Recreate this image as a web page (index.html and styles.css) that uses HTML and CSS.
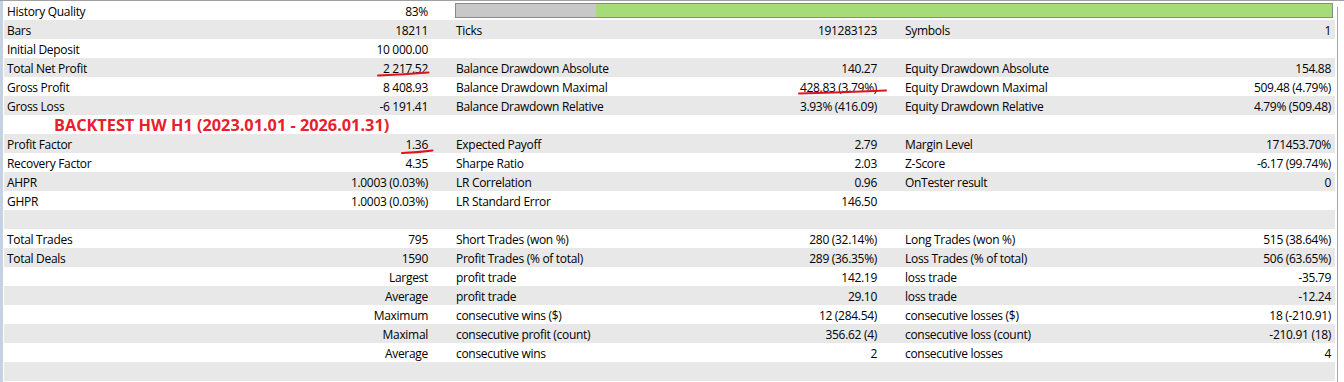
FILE: index.html
```html
<!DOCTYPE html>
<html lang="en">
<head>
<meta charset="utf-8">
<title>Backtest report</title>
<link rel="stylesheet" href="styles.css">
</head>
<body>
<div class="window">
  <div class="edge"></div>
  <div class="report">
    <div class="row">
      <div class="cell"><span>History Quality</span><span>83%</span></div>
      <div class="quality"><div class="q-grey"></div><div class="q-green"></div></div>
    </div>
    <div class="row alt">
      <div class="cell"><span>Bars</span><span>18211</span></div>
      <div class="cell"><span>Ticks</span><span>191283123</span></div>
      <div class="cell"><span>Symbols</span><span>1</span></div>
    </div>
    <div class="row">
      <div class="cell"><span>Initial Deposit</span><span>10 000.00</span></div>
      <div class="cell"></div>
      <div class="cell"></div>
    </div>
    <div class="row alt">
      <div class="cell"><span>Total Net Profit</span><span>2 217.52</span></div>
      <div class="cell"><span>Balance Drawdown Absolute</span><span>140.27</span></div>
      <div class="cell"><span>Equity Drawdown Absolute</span><span>154.88</span></div>
    </div>
    <div class="row">
      <div class="cell"><span>Gross Profit</span><span>8 408.93</span></div>
      <div class="cell"><span>Balance Drawdown Maximal</span><span>428.83 (3.79%)</span></div>
      <div class="cell"><span>Equity Drawdown Maximal</span><span>509.48 (4.79%)</span></div>
    </div>
    <div class="row alt">
      <div class="cell"><span>Gross Loss</span><span>-6 191.41</span></div>
      <div class="cell"><span>Balance Drawdown Relative</span><span>3.93% (416.09)</span></div>
      <div class="cell"><span>Equity Drawdown Relative</span><span>4.79% (509.48)</span></div>
    </div>
    <div class="row">
      <div class="cell"><span class="title">BACKTEST HW H1 (2023.01.01 - 2026.01.31)</span></div>
      <div class="cell"></div>
      <div class="cell"></div>
    </div>
    <div class="row alt">
      <div class="cell"><span>Profit Factor</span><span>1.36</span></div>
      <div class="cell"><span>Expected Payoff</span><span>2.79</span></div>
      <div class="cell"><span>Margin Level</span><span>171453.70%</span></div>
    </div>
    <div class="row">
      <div class="cell"><span>Recovery Factor</span><span>4.35</span></div>
      <div class="cell"><span>Sharpe Ratio</span><span>2.03</span></div>
      <div class="cell"><span>Z-Score</span><span>-6.17 (99.74%)</span></div>
    </div>
    <div class="row alt">
      <div class="cell"><span>AHPR</span><span>1.0003 (0.03%)</span></div>
      <div class="cell"><span>LR Correlation</span><span>0.96</span></div>
      <div class="cell"><span>OnTester result</span><span>0</span></div>
    </div>
    <div class="row">
      <div class="cell"><span>GHPR</span><span>1.0003 (0.03%)</span></div>
      <div class="cell"><span>LR Standard Error</span><span>146.50</span></div>
      <div class="cell"></div>
    </div>
    <div class="row alt"></div>
    <div class="row">
      <div class="cell"><span>Total Trades</span><span>795</span></div>
      <div class="cell"><span>Short Trades (won %)</span><span>280 (32.14%)</span></div>
      <div class="cell"><span>Long Trades (won %)</span><span>515 (38.64%)</span></div>
    </div>
    <div class="row alt">
      <div class="cell"><span>Total Deals</span><span>1590</span></div>
      <div class="cell"><span>Profit Trades (% of total)</span><span>289 (36.35%)</span></div>
      <div class="cell"><span>Loss Trades (% of total)</span><span>506 (63.65%)</span></div>
    </div>
    <div class="row">
      <div class="cell"><span></span><span>Largest</span></div>
      <div class="cell"><span>profit trade</span><span>142.19</span></div>
      <div class="cell"><span>loss trade</span><span>-35.79</span></div>
    </div>
    <div class="row alt">
      <div class="cell"><span></span><span>Average</span></div>
      <div class="cell"><span>profit trade</span><span>29.10</span></div>
      <div class="cell"><span>loss trade</span><span>-12.24</span></div>
    </div>
    <div class="row">
      <div class="cell"><span></span><span>Maximum</span></div>
      <div class="cell"><span>consecutive wins ($)</span><span>12 (284.54)</span></div>
      <div class="cell"><span>consecutive losses ($)</span><span>18 (-210.91)</span></div>
    </div>
    <div class="row alt">
      <div class="cell"><span></span><span>Maximal</span></div>
      <div class="cell"><span>consecutive profit (count)</span><span>356.62 (4)</span></div>
      <div class="cell"><span>consecutive loss (count)</span><span>-210.91 (18)</span></div>
    </div>
    <div class="row">
      <div class="cell"><span></span><span>Average</span></div>
      <div class="cell"><span>consecutive wins</span><span>2</span></div>
      <div class="cell"><span>consecutive losses</span><span>4</span></div>
    </div>
    <div class="row alt"></div>
  </div>
  <div class="scroll"><div class="scroll-line"></div></div>
  <svg class="marks" width="1344" height="382" viewBox="0 0 1344 382">
    <path d="M378 75.5 Q404 74.5 428.5 72.5" />
    <path d="M799 93.5 Q842 92.5 886 90.5" />
    <path d="M402 153 Q418 152.5 432.5 150.5" />
  </svg>
</div>
</body>
</html>
```

FILE: styles.css
```css
html, body {
  margin: 0;
  padding: 0;
  background: #ffffff;
}

.window {
  position: relative;
  display: flex;
  width: 1344px;
  height: 382px;
  overflow: hidden;
  border-top: 1px solid #a0a0a0;
  box-sizing: border-box;
  font-family: "Open Sans", "Noto Sans", sans-serif;
  font-size: 12px;
  letter-spacing: -0.3px;
  color: #000000;
}

.edge {
  width: 3px;
  flex: none;
  background: #c4d2e2;
  margin-top: -1px;
}

.report {
  width: 1331px;
  flex: none;
  padding-left: 1px;
}

.row {
  display: grid;
  grid-template-columns: 421px 421px 426px;
  column-gap: 28px;
  padding-left: 3px;
  height: 19px;
  line-height: 19px;
  background: #ffffff;
}

.row.alt {
  background: #e8e8e8;
}

.cell {
  display: flex;
  justify-content: space-between;
  white-space: nowrap;
  padding-top: 1px;
  height: 18px;
}

.title {
  font-weight: 700;
  font-size: 16.3px;
  letter-spacing: 0;
  color: #e8202c;
  padding-left: 47px;
  line-height: 17px;
  padding-top: 1px;
}

.quality {
  grid-column: 2 / 4;
  display: flex;
  align-self: center;
  height: 15px;
  margin-left: -1px;
  margin-right: -2px;
  border: 1px solid #8a8a8a;
  box-sizing: border-box;
}

.q-grey {
  width: 140px;
  background: #c8c8c8;
}

.q-green {
  flex: 1;
  background: #a6dc78;
}

.scroll {
  flex: 1;
  display: flex;
  padding-left: 2px;
  padding-top: 6px;
  background: #ffffff;
}

.scroll-line {
  width: 1px;
  background: #a8a8a8;
}

.marks {
  position: absolute;
  left: 0;
  top: -1px;
  pointer-events: none;
}

.marks path {
  fill: none;
  stroke: #e0141e;
  stroke-width: 2;
  stroke-linecap: round;
}
```
